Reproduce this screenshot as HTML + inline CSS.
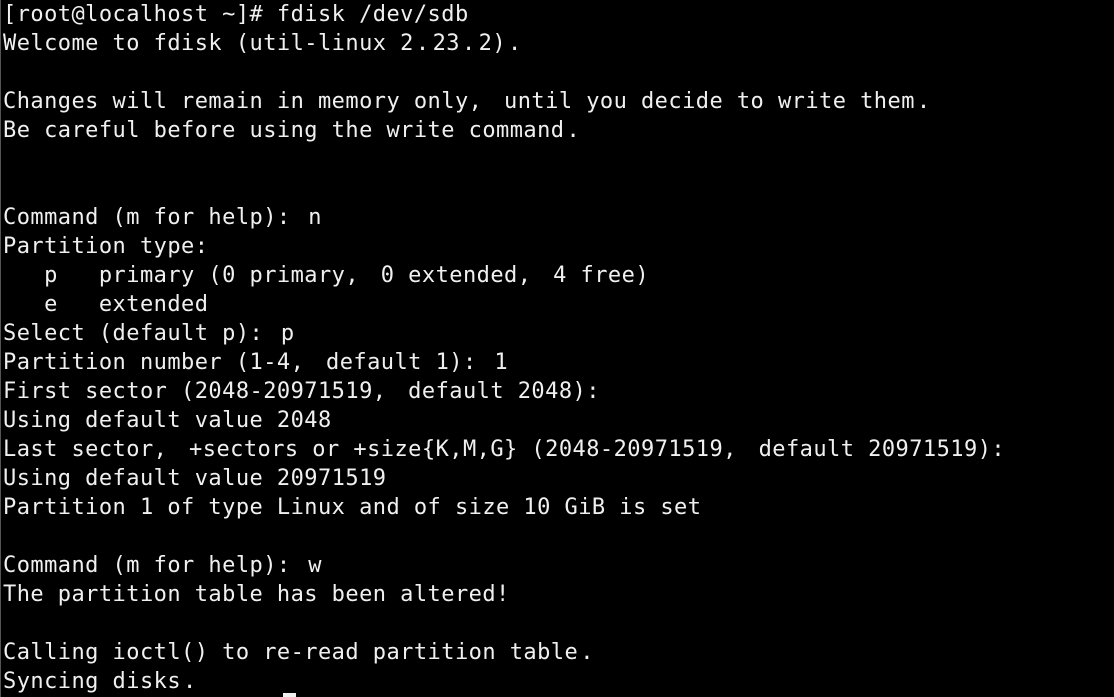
<!DOCTYPE html>
<html><head><meta charset="utf-8"><style>
html,body{margin:0;padding:0;background:#000;width:1114px;height:697px;overflow:hidden}
pre{margin:0;position:absolute;left:3px;top:0;color:#f0f0f0;font-family:"DejaVu Sans Mono","Liberation Mono",monospace;font-size:22px;line-height:29px;letter-spacing:0.45px}
.k{margin-right:8px}.d{margin-left:2px;margin-right:3px}.o{margin-right:4px}
.b{position:absolute;left:0;top:0;width:1px;height:697px;background:#555}
.c{position:absolute;left:283px;top:693px;width:13px;height:4px;background:#f0f0f0}
</style></head><body>
<div class="b"></div>
<pre id="t">[root@localhost ~]# fdisk /dev/sdb
Welcome to fdisk (util-linux 2.23.2).

Changes will remain in memory only, until you decide to write them.
Be careful before using the write command.


Command (m for help): n
Partition type:
   p   primary (0 primary, 0 extended, 4 free)
   e   extended
Select (default p): p
Partition number (1-4, default 1): 1
First sector (2048-20971519, default 2048):
Using default value 2048
Last sector, +sectors or +size{K,M,G} (2048-20971519, default 20971519):
Using default value 20971519
Partition 1 of type Linux and of size 10 GiB is set

Command (m for help): w
The partition table has been altered!

Calling ioctl() to re-read partition table.
Syncing disks.</pre>
<div class="c"></div>
<script>
var t=document.getElementById('t');
t.innerHTML=t.innerHTML.replace(/, /g,'<span class="k">,</span> ').replace(/\./g,'<span class="d">.</span>').replace(/:/g,'<span class="o">:</span>');
</script>
</body></html>
